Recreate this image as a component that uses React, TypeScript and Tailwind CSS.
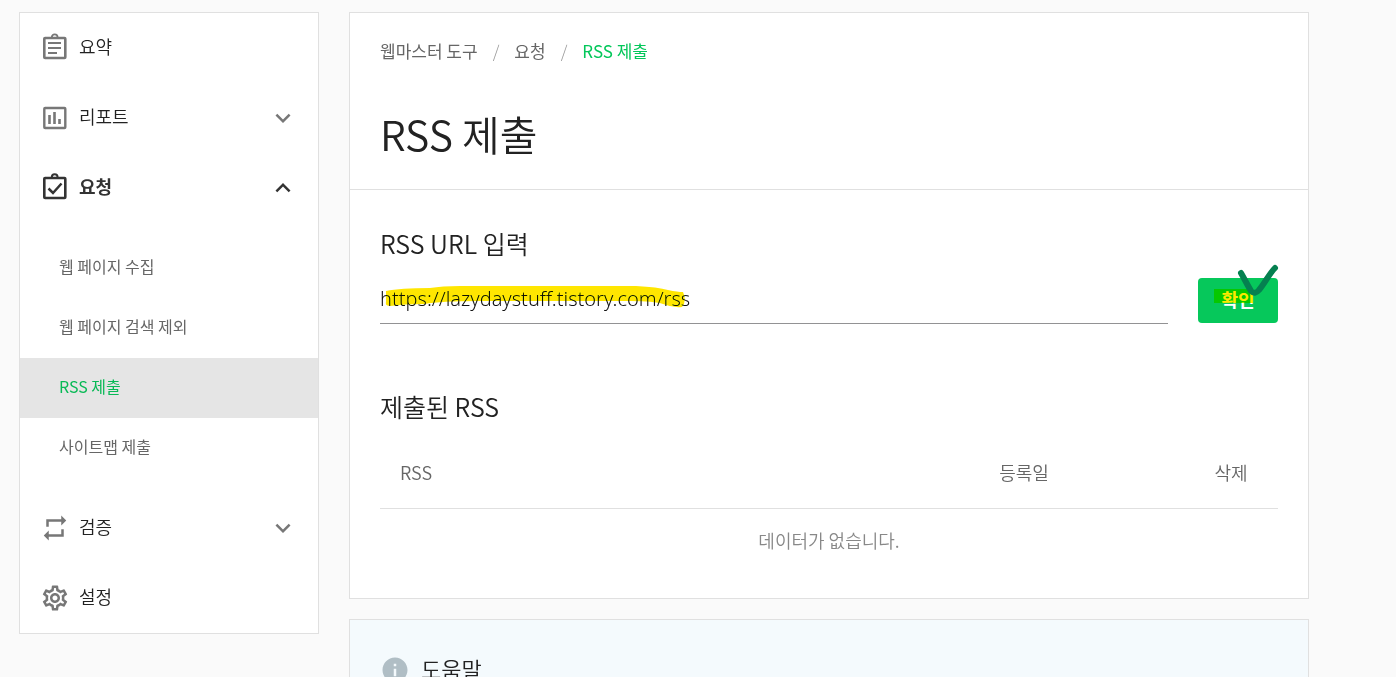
import React, { useState } from "react";
import clsx from "clsx";
import { MdExpandLess, MdExpandMore, MdInfo, MdOutlineSettings, MdRepeat } from "react-icons/md";

interface MenuItem {
  label: string;
  icon: React.ReactNode;
  children?: string[];
  collapsible?: boolean;
}

const SummaryIcon = () => (
  <svg viewBox="0 0 30 30" fill="none" stroke="currentColor" className="size-[30px]">
    <rect x="4.3" y="5" width="21" height="20" rx="0.8" strokeWidth="2.6" />
    <path d="M8 10h13M8 15h13M8 20h9" strokeWidth="2.2" />
    <path d="M11.8 4.2a2.9 2.9 0 0 1 5.8 0" strokeWidth="1.8" />
  </svg>
);

const ReportIcon = () => (
  <svg viewBox="0 0 30 30" fill="none" stroke="currentColor" className="size-[30px]">
    <rect x="4.3" y="5" width="21" height="20" rx="0.8" strokeWidth="2.4" />
    <path d="M9.5 12v9M14.5 9v12M19.5 16v5" strokeWidth="2.6" />
  </svg>
);

const RequestIcon = () => (
  <svg viewBox="0 0 30 30" fill="none" stroke="currentColor" className="size-[30px]">
    <rect x="4.3" y="5" width="21" height="20" rx="0.8" strokeWidth="2.6" />
    <path d="M8.5 15.5l4.5 4.5 8.5-9.5" strokeWidth="2.5" />
    <path d="M11.8 4.2a2.9 2.9 0 0 1 5.8 0" strokeWidth="2" />
  </svg>
);

const MENU: MenuItem[] = [
  { label: "요약", icon: <SummaryIcon /> },
  { label: "리포트", icon: <ReportIcon />, collapsible: true },
  {
    label: "요청",
    icon: <RequestIcon />,
    collapsible: true,
    children: ["웹 페이지 수집", "웹 페이지 검색 제외", "RSS 제출", "사이트맵 제출"],
  },
  { label: "검증", icon: <MdRepeat className="size-[30px]" />, collapsible: true },
  { label: "설정", icon: <MdOutlineSettings className="size-[30px]" /> },
];

const Sidebar = () => {
  const [openMenu, setOpenMenu] = useState("요청");

  return (
    <nav className="w-[300px] shrink-0 border border-[#e0e0e0] bg-white">
      {MENU.map((item) => {
        const isOpen = openMenu === item.label;

        return (
          <div key={item.label}>
            <button
              type="button"
              onClick={() => setOpenMenu(isOpen ? "" : item.label)}
              className={clsx(
                "flex h-[70px] w-full items-center gap-[9px] px-5 text-left text-lg",
                isOpen ? "font-bold text-[#333]" : "font-[350] text-[#222]"
              )}
            >
              <span className={isOpen ? "text-[#333]" : "text-[#777]"}>{item.icon}</span>
              <span className="flex-1 pb-1">{item.label}</span>
              {item.collapsible &&
                (isOpen ? (
                  <MdExpandLess className="size-[30px] text-[#333]" />
                ) : (
                  <MdExpandMore className="size-[30px] text-[#777]" />
                ))}
            </button>

            {isOpen && item.children && (
              <ul className="py-[15px]">
                {item.children.map((child) => (
                  <li key={child}>
                    <a
                      href="#"
                      className={clsx(
                        "flex h-[60px] items-center px-[39px] pb-1 text-base",
                        child === "RSS 제출" ? "bg-[#e5e5e5] text-[#08b955]" : "text-[#666]"
                      )}
                    >
                      {child}
                    </a>
                  </li>
                ))}
              </ul>
            )}
          </div>
        );
      })}
    </nav>
  );
};

const Breadcrumb = () => (
  <div className="flex items-center gap-[15px] text-[17px] leading-6 text-[#666]">
    <a href="#">웹마스터 도구</a>
    <span className="font-light text-[#999]">/</span>
    <a href="#">요청</a>
    <span className="font-light text-[#999]">/</span>
    <span className="text-[#03c75a]">RSS 제출</span>
  </div>
);

const SubmitForm = () => {
  const [url, setUrl] = useState("https://lazydaystuff.tistory.com/rss");

  return (
    <form onSubmit={(e) => e.preventDefault()}>
      <label htmlFor="rss-url" className="block text-[25px] leading-9 font-[350] text-[#222]">
        RSS URL 입력
      </label>
      <div className="mt-[17px] flex items-start gap-[30px]">
        <div className="relative flex-1">
          <input
            id="rss-url"
            type="text"
            value={url}
            onChange={(e) => setUrl(e.target.value)}
            className="block h-[46px] w-full border-b border-[#929294] pb-[5px] font-['Noto_Sans'] text-xl font-light text-[#111] outline-none"
          />
          {/* Highlighter stroke over the address */}
          <svg
            viewBox="0 0 306 24"
            className="pointer-events-none absolute top-2 left-0 h-6 w-[306px] mix-blend-darken"
          >
            <path
              d="M6 5Q20 2 50 2Q62 0 80 0H256Q278 1 288 4Q298 6 303 6Q307 15 302 21Q293 22 283 18Q274 15 250 15H100Q60 15 45 18Q25 18 10 20Q5 20 6 16Z"
              fill="#ffe600"
            />
          </svg>
        </div>
        <div className="relative">
          <button
            type="submit"
            className="block h-[45px] w-20 rounded bg-[#06c85b] pb-1 text-lg font-bold text-white"
          >
            확인
          </button>
          {/* Highlight and check drawn over the button */}
          <span className="pointer-events-none absolute top-[11px] left-4 h-[14px] w-[39px] bg-[#ffe600] mix-blend-darken" />
          <svg
            viewBox="0 0 44 34"
            className="pointer-events-none absolute -top-4 left-[39px] h-[34px] w-11"
          >
            <path
              d="M4 11C8 18 11 24 14 29Q18 33 22 28C28 21 32 12 38 6"
              fill="none"
              stroke="#058050"
              strokeWidth="6"
              strokeLinecap="round"
              strokeLinejoin="round"
            />
          </svg>
        </div>
      </div>
    </form>
  );
};

const SubmittedTable = () => (
  <section className="mt-[62px]">
    <h2 className="text-[25px] leading-10 font-[350] text-[#222]">제출된 RSS</h2>
    <table className="mt-[10px] w-full table-fixed text-lg">
      <thead>
        <tr className="h-[72px] border-b border-[#e0e0e0] text-[#666]">
          <th className="px-5 text-left font-[350]">RSS</th>
          <th className="w-[320px] font-[350]">등록일</th>
          <th className="w-[94px] font-[350]">삭제</th>
        </tr>
      </thead>
      <tbody>
        <tr>
          <td colSpan={3} className="h-16 text-center font-[350] text-[#888]">
            데이터가 없습니다.
          </td>
        </tr>
      </tbody>
    </table>
  </section>
);

export default function App() {
  return (
    <div className="flex min-h-screen items-start gap-[30px] bg-[#fafafa] pt-3 pr-[87px] pl-[19px] font-['Noto_Sans_CJK_KR',sans-serif]">
      <Sidebar />

      <main className="min-w-0 flex-1">
        <div className="border border-[#e0e0e0] bg-white">
          <header className="border-b border-[#e0e0e0] px-[30px] py-[26px]">
            <Breadcrumb />
            <h1 className="mt-10 text-[41px] leading-[60px] font-[350] text-[#222]">RSS 제출</h1>
          </header>
          <div className="px-[30px] pt-[35px] pb-[26px]">
            <SubmitForm />
            <SubmittedTable />
          </div>
        </div>

        <section className="mt-5 border border-[#e0e0e0] bg-[#f4fafd] px-[30px] pt-7">
          <h2 className="flex items-center gap-[11px] text-[22px] leading-10 font-[350] text-[#222]">
            <MdInfo className="size-[30px] text-[#b0bec5]" />
            <span className="pb-1">도움말</span>
          </h2>
        </section>
      </main>
    </div>
  );
}
